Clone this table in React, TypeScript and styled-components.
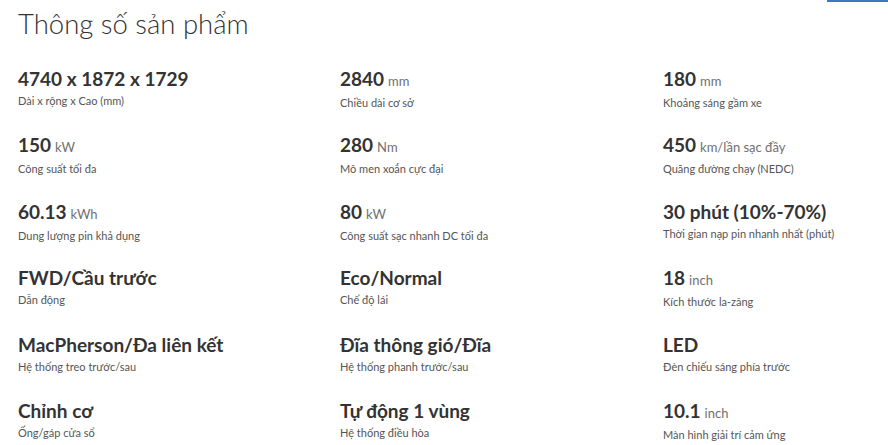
import styled, { createGlobalStyle } from "styled-components";

const GlobalStyle = createGlobalStyle`
    html, body {
        margin: 0;
        padding: 0;
        background: #ffffff;
    }
    body {
        font-family: "Lato", "Noto Sans", sans-serif;
        color: #333333;
    }
`;

interface ISpec {
    value: string;
    unit?: string;
    label: string;
}

const specs: ISpec[] = [
    { value: "4740 x 1872 x 1729", label: "Dài x rộng x Cao (mm)" },
    { value: "2840", unit: "mm", label: "Chiều dài cơ sở" },
    { value: "180", unit: "mm", label: "Khoảng sáng gầm xe" },
    { value: "150", unit: "kW", label: "Công suất tối đa" },
    { value: "280", unit: "Nm", label: "Mô men xoắn cực đại" },
    { value: "450", unit: "km/lần sạc đầy", label: "Quãng đường chạy (NEDC)" },
    { value: "60.13", unit: "kWh", label: "Dung lượng pin khả dụng" },
    { value: "80", unit: "kW", label: "Công suất sạc nhanh DC tối đa" },
    { value: "30 phút (10%-70%)", label: "Thời gian nạp pin nhanh nhất (phút)" },
    { value: "FWD/Cầu trước", label: "Dẫn động" },
    { value: "Eco/Normal", label: "Chế độ lái" },
    { value: "18", unit: "inch", label: "Kích thước la-zăng" },
    { value: "MacPherson/Đa liên kết", label: "Hệ thống treo trước/sau" },
    { value: "Đĩa thông gió/Đĩa", label: "Hệ thống phanh trước/sau" },
    { value: "LED", label: "Đèn chiếu sáng phía trước" },
    { value: "Chỉnh cơ", label: "Ống/gáp cửa sổ" },
    { value: "Tự động 1 vùng", label: "Hệ thống điều hòa" },
    { value: "10.1", unit: "inch", label: "Màn hình giải trí cảm ứng" },
];

const Page = styled.div`
    width: 888px;
    height: 445px;
    overflow: hidden;
`;

const TopBar = styled.div`
    display: flex;
    justify-content: flex-end;
    height: 2px;
`;

const TopButtonEdge = styled.div`
    width: 61px;
    height: 2px;
    background: #3a78c8;
`;

const Title = styled.h2`
    margin: 6px 0 0 18px;
    font-size: 27.5px;
    font-weight: 300;
    line-height: 32px;
    color: #333333;
`;

const Grid = styled.div`
    display: grid;
    grid-template-columns: 322px 323px 1fr;
    grid-auto-rows: 66.4px;
    padding: 27px 0 0 18px;
`;

const Value = styled.div`
    font-size: 19px;
    font-weight: 700;
    line-height: 24px;
    color: #333333;
`;

const Unit = styled.span`
    font-size: 13px;
    font-weight: 400;
    color: #707070;
    margin-left: 4px;
`;

const Label = styled.div`
    margin-top: 3px;
    font-size: 11px;
    line-height: 14px;
    color: #555555;
`;

const SpecItem = ({ value, unit, label }: ISpec) => {
    return (
        <div>
            <Value>
                {value}
                {unit && <Unit>{unit}</Unit>}
            </Value>
            <Label>{label}</Label>
        </div>
    );
};

const App = () => {
    return (
        <Page>
            <GlobalStyle />
            <TopBar>
                <TopButtonEdge />
            </TopBar>
            <Title>Thông số sản phẩm</Title>
            <Grid>
                {specs.map((spec, i) => (
                    <SpecItem key={i} {...spec} />
                ))}
            </Grid>
        </Page>
    );
};

export default App;
